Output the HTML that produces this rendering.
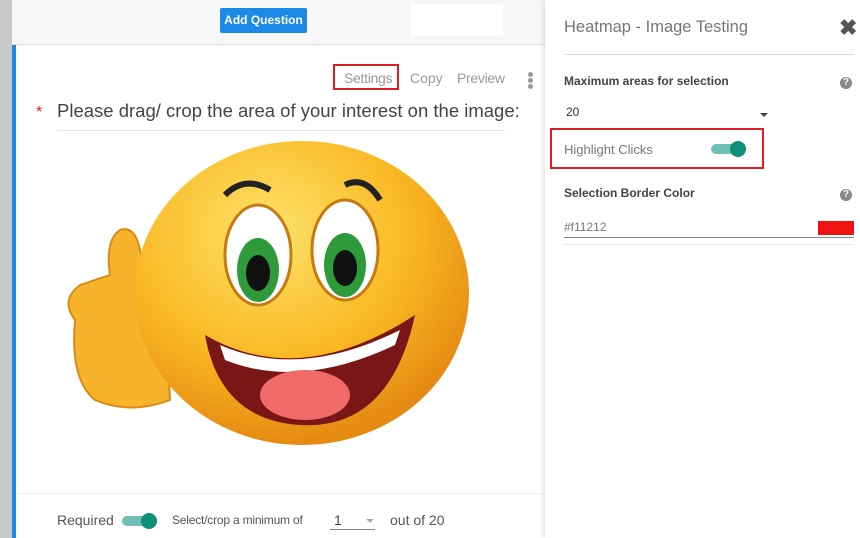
<!DOCTYPE html>
<html><head><style>
body{margin:0;width:860px;height:538px;overflow:hidden;background:#fff;font-family:"Liberation Sans",sans-serif;position:relative}
.abs{position:absolute}
</style></head><body>
<div class="abs" style="left:0;top:0;width:12px;height:538px;background:#c9c9c9"></div>
<div class="abs" style="left:12px;top:0;width:533px;height:44px;background:#f7f7f7;border-bottom:1px solid #ddd"></div>
<div class="abs" style="left:220px;top:8px;width:87px;height:25px;background:#1a8ae6;border-radius:2px;color:#fff;font-size:12px;font-weight:bold;text-align:center;line-height:25px">Add Question</div>
<div class="abs" style="left:410px;top:4px;width:93px;height:32px;background:#fff"></div>
<div class="abs" style="left:12px;top:45px;width:4px;height:493px;background:#1a8ae6"></div>
<div class="abs" style="left:333px;top:64px;width:66px;height:26px;border:2px solid #e31c23;box-sizing:border-box"></div>
<div class="abs" style="left:344px;top:70px;font-size:14px;color:#999;letter-spacing:-0.3px">Settings</div>
<div class="abs" style="left:410px;top:70px;font-size:14px;color:#999">Copy</div>
<div class="abs" style="left:457px;top:70px;font-size:14px;color:#999;letter-spacing:-0.3px">Preview</div>
<div class="abs" style="left:528px;top:72px;width:5px;height:5px;border-radius:50%;background:#999;box-shadow:0 6px #999,0 12px #999"></div>
<div class="abs" style="left:36px;top:104px;font-size:16px;color:#e31c23">*</div>
<div class="abs" style="left:57px;top:100px;font-size:18.5px;color:#444">Please drag/ crop the area of your interest on the image:</div>
<div class="abs" style="left:57px;top:130px;width:448px;height:1px;background:#e6e6e6"></div>
<svg class="abs" style="left:0;top:0" width="545" height="538">
<defs><radialGradient id="f" cx="0.4" cy="0.3" r="0.7"><stop offset="0" stop-color="#fde36a"/><stop offset="0.6" stop-color="#f9b823"/><stop offset="1" stop-color="#e58a12"/></radialGradient></defs>
<path d="M75 320 Q60 300 80 285 L110 275 Q105 240 120 230 Q135 225 140 250 L150 300 L165 300 L170 400 Q130 415 95 400 Q70 380 75 320Z" fill="#f6b42a" stroke="#d98a16" stroke-width="2"/>
<ellipse cx="302" cy="293" rx="167" ry="152" fill="url(#f)"/>
<ellipse cx="258" cy="255" rx="33" ry="50" fill="#fff" stroke="#c77a10" stroke-width="3"/>
<ellipse cx="345" cy="250" rx="33" ry="50" fill="#fff" stroke="#c77a10" stroke-width="3"/>
<ellipse cx="258" cy="270" rx="21" ry="32" fill="#2f9a3a"/><ellipse cx="345" cy="265" rx="21" ry="32" fill="#2f9a3a"/>
<ellipse cx="258" cy="273" rx="12" ry="18" fill="#111"/><ellipse cx="345" cy="268" rx="12" ry="18" fill="#111"/>
<path d="M225 195 Q245 175 270 190" stroke="#222" stroke-width="6" fill="none"/>
<path d="M345 185 Q365 175 380 200" stroke="#222" stroke-width="6" fill="none"/>
<path d="M205 335 Q300 390 415 315 Q390 430 300 425 Q220 420 205 335Z" fill="#7a1616"/>
<path d="M220 345 Q300 380 400 330 L395 345 Q300 390 225 360Z" fill="#fff"/>
<ellipse cx="305" cy="395" rx="45" ry="25" fill="#f06a6a"/>
</svg>
<div class="abs" style="left:16px;top:493px;width:529px;height:1px;background:#eee"></div>
<div class="abs" style="left:57px;top:512px;font-size:14px;color:#555">Required</div>
<div class="abs" style="left:122px;top:516px;width:30px;height:10px;border-radius:5px;background:#6fbfb5"></div>
<div class="abs" style="left:141px;top:513px;width:16px;height:16px;border-radius:50%;background:#0c9078"></div>
<div class="abs" style="left:172px;top:513px;font-size:12px;color:#555;letter-spacing:-0.2px">Select/crop a minimum of</div>
<div class="abs" style="left:334px;top:512px;font-size:14px;color:#444">1</div>
<div class="abs" style="left:366px;top:519px;border:4px solid transparent;border-top:4px solid #aaa"></div>
<div class="abs" style="left:330px;top:529px;width:45px;height:1px;background:#888"></div>
<div class="abs" style="left:390px;top:512px;font-size:14px;color:#555">out of 20</div>
<div class="abs" style="left:545px;top:0;width:315px;height:538px;background:#fff;box-shadow:-2px 0 4px rgba(0,0,0,.1)"></div>
<div class="abs" style="left:564px;top:18px;font-size:16.5px;color:#777">Heatmap - Image Testing</div>
<div class="abs" style="left:839px;top:15px;font-size:22px;color:#555;font-weight:bold">✖</div>
<div class="abs" style="left:564px;top:54px;width:290px;height:1px;background:#ddd"></div>
<div class="abs" style="left:564px;top:74px;font-size:12px;font-weight:bold;color:#444">Maximum areas for selection</div>
<div class="abs" style="left:840px;top:77px;width:12px;height:12px;border-radius:50%;background:#888;color:#fff;font-size:10px;font-weight:bold;text-align:center;line-height:12px">?</div>
<div class="abs" style="left:566px;top:105px;font-size:12px;color:#333">20</div>
<div class="abs" style="left:760px;top:113px;border:4px solid transparent;border-top:4px solid #444"></div>
<div class="abs" style="left:550px;top:128px;width:214px;height:41px;border:2px solid #e31c23;box-sizing:border-box"></div>
<div class="abs" style="left:564px;top:142px;font-size:13px;color:#777">Highlight Clicks</div>
<div class="abs" style="left:711px;top:144px;width:30px;height:10px;border-radius:5px;background:#6fbfb5"></div>
<div class="abs" style="left:730px;top:141px;width:16px;height:16px;border-radius:50%;background:#0c9078"></div>
<div class="abs" style="left:564px;top:186px;font-size:12px;font-weight:bold;color:#444">Selection Border Color</div>
<div class="abs" style="left:840px;top:189px;width:12px;height:12px;border-radius:50%;background:#888;color:#fff;font-size:10px;font-weight:bold;text-align:center;line-height:12px">?</div>
<div class="abs" style="left:564px;top:220px;font-size:12px;color:#777">#f11212</div>
<div class="abs" style="left:818px;top:221px;width:36px;height:14px;background:#f11212"></div>
<div class="abs" style="left:564px;top:237px;width:290px;height:1px;background:#888"></div>
<div class="abs" style="left:564px;top:244px;width:290px;height:1px;background:#e6e6e6"></div>
</body></html>
